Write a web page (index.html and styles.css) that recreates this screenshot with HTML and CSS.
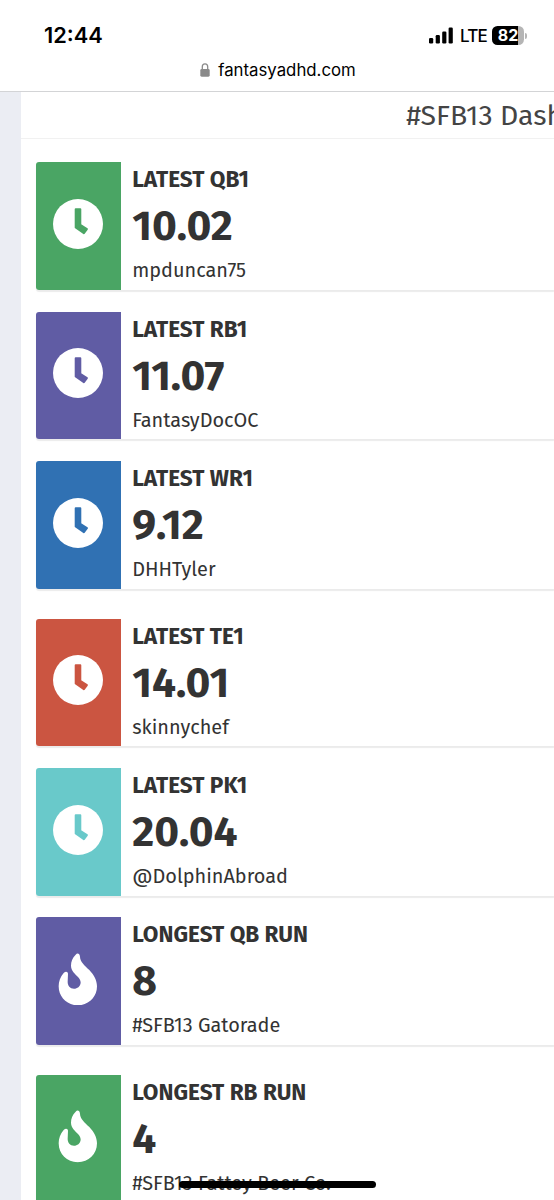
FILE: index.html
```
<!DOCTYPE html>
<html lang="en">
<head>
 <meta charset="utf-8">
 <title>#SFB13 Dash</title>
 <link rel="stylesheet" href="styles.css">
</head>
<body>
<svg class="defs" width="0" height="0">
 <symbol id="clock" viewBox="0 0 50 50">
  <circle cx="25" cy="25" r="25" fill="#fff"/>
  <path d="M22.7 10.3h4.6v15.5l6.6 4.4-3 3.9-8.2-5.7z" fill="currentColor" stroke="currentColor" stroke-width="2" stroke-linejoin="round"/>
 </symbol>
 <symbol id="flame" viewBox="40 37 120 158">
  <path d="M93 42C83 52 79 63 79 75C79 90 91 99 102 111C106 116 108 121 108 126C107 137 98 144 88 144C76 144 69 135 69 124L70 99C69 92 63 91 57 97C47 108 42 122 42 137C42 169 67 194 99 194C132 194 157 169 157 137C157 119 148 103 134 88C120 74 106 63 106 48C105 38 98 36 93 42Z" fill="#fff"/>
 </symbol>
</svg>

<header class="phone">
 <div class="status">
  <span class="time">12:44</span>
  <div class="signals">
   <svg class="bars" width="25" height="17" viewBox="0 0 25 17">
    <rect x="0" y="11" width="4.2" height="5.5" rx="1.2"/>
    <rect x="6.7" y="8" width="4.2" height="8.5" rx="1.2"/>
    <rect x="13.2" y="4.5" width="4.2" height="12" rx="1.2"/>
    <rect x="19.6" y="0.5" width="4.2" height="16" rx="1.2"/>
   </svg>
   <span class="lte">LTE</span>
   <span class="battery">82</span>
   <span class="nub"></span>
  </div>
 </div>
 <div class="address">
  <svg width="10" height="14" viewBox="0 0 10 14">
   <path d="M2.3 7V3.8a2.7 3 0 0 1 5.4 0V7" fill="none" stroke="#8a8a8a" stroke-width="1.3"/>
   <rect x="0.3" y="6" width="9.4" height="7.7" rx="1.4" fill="#8a8a8a"/>
  </svg>
  <span class="url">fantasyadhd.com</span>
 </div>
</header>

<main class="content">
 <h1>#SFB13 Dash</h1>

 <div class="group">
  <div class="info-box">
   <div class="icon green"><svg class="clock"><use href="#clock"/></svg></div>
   <div class="text"><span class="label">LATEST QB1</span><span class="number">10.02</span><span class="owner">mpduncan75</span></div>
  </div>
  <div class="info-box">
   <div class="icon purple"><svg class="clock"><use href="#clock"/></svg></div>
   <div class="text"><span class="label">LATEST RB1</span><span class="number">11.07</span><span class="owner">FantasyDocOC</span></div>
  </div>
  <div class="info-box">
   <div class="icon blue"><svg class="clock"><use href="#clock"/></svg></div>
   <div class="text"><span class="label">LATEST WR1</span><span class="number">9.12</span><span class="owner">DHHTyler</span></div>
  </div>
 </div>

 <div class="group">
  <div class="info-box">
   <div class="icon red"><svg class="clock"><use href="#clock"/></svg></div>
   <div class="text"><span class="label">LATEST TE1</span><span class="number">14.01</span><span class="owner">skinnychef</span></div>
  </div>
  <div class="info-box">
   <div class="icon teal"><svg class="clock"><use href="#clock"/></svg></div>
   <div class="text"><span class="label">LATEST PK1</span><span class="number">20.04</span><span class="owner">@DolphinAbroad</span></div>
  </div>
  <div class="info-box">
   <div class="icon purple"><svg class="flame"><use href="#flame"/></svg></div>
   <div class="text"><span class="label">LONGEST QB RUN</span><span class="number">8</span><span class="owner">#SFB13 Gatorade</span></div>
  </div>
 </div>

 <div class="group">
  <div class="info-box">
   <div class="icon green"><svg class="flame"><use href="#flame"/></svg></div>
   <div class="text"><span class="label">LONGEST RB RUN</span><span class="number">4</span><span class="owner">#SFB13 Fattey Beer Co.</span></div>
  </div>
 </div>
</main>

<div class="home-bar"></div>
</body>
</html>
```
FILE: styles.css
```
* { box-sizing: border-box; }

body {
 margin:       0;
 height:       1200px;
 overflow:     hidden;
 display:      flex;
 flex-direction: column;
 background:   #ebedf3;
 color:        #333;
 font-family:  "Fira Sans", "Noto Sans", sans-serif;
}

.defs { position: absolute; }

/* phone status bar and address */
.phone {
 flex:         none;
 height:       91.5px;
 padding-top:  21px;
 background:   #fff;
 border-bottom: 1.5px solid #d3d4d6;
 color:        #000;
 font-family:  Inter, sans-serif;
}

.status {
 display:      flex;
 justify-content: space-between;
 align-items:  center;
 height:       29px;
 padding:      0 27px 0 44px;
}

.time {
 font-size:    21.8px;
 font-weight:  600;
 line-height:  27px;
 padding-bottom: 1px;
}

.signals {
 display:      flex;
 align-items:  center;
}

.lte {
 margin-left:  6px;
 width:        26px;
 font-size:    17px;
 font-weight:  500;
 letter-spacing: -0.8px;
}

.battery {
 margin-left:  6px;
 width:        32px;
 height:       19px;
 border-radius: 5.5px;
 background:   linear-gradient(to right, #000 26.5px, #b5b5b5 26.5px);
 color:        #fff;
 font-size:    16px;
 font-weight:  700;
 line-height:  19px;
 text-align:   center;
}

.nub {
 margin-left:  1px;
 width:        2px;
 height:       6px;
 border-radius: 0 2px 2px 0;
 background:   #b5b5b5;
}

.address {
 display:      flex;
 justify-content: center;
 align-items:  center;
 gap:          8px;
 height:       40px;
 padding-left: 2px;
}

.url {
 font-size:    16.8px;
 line-height:  20px;
}

/* dashboard */
.content {
 flex:         1;
 min-height:   0;
 margin-left:  21px;
 overflow:     hidden;
 background:   #fff;
}

h1 {
 margin:       0 0 23.3px;
 height:       47.5px;
 padding-left: 385.3px;
 border-bottom: 1px solid #f1f1f1;
 color:        #444;
 font-size:    28.4px;
 font-weight:  400;
 line-height:  47px;
 white-space:  nowrap;
}

.group {
 display:      flex;
 flex-direction: column;
 gap:          21.3px;
 margin:       0 0 29.8px 14.6px;
}

.info-box {
 display:      flex;
 height:       127.8px;
 margin-bottom: 0.2px;
 border-radius: 3px 0 0 3px;
 background:   #fff;
 box-shadow:   0 1.3px 1px rgba(0, 0, 0, 0.08);
}

.icon {
 display:      flex;
 justify-content: center;
 align-items:  center;
 width:        85px;
 padding-bottom: 4.5px;
 border-radius: 3px 0 0 3px;
}

.clock { width: 50px; height: 50px; }
.flame { width: 40px; height: 52.7px; }

.green  { background: #4aa564; color: #4aa564; }
.purple { background: #605ca4; color: #605ca4; }
.blue   { background: #3071b3; color: #3071b3; }
.red    { background: #cb5541; color: #cb5541; }
.teal   { background: #69c9ca; color: #69c9ca; }

.text {
 display:      flex;
 flex-direction: column;
 padding:      3px 0 0 11.6px;
 white-space:  nowrap;
}

.label {
 height:       30px;
 font-size:    22.6px;
 font-weight:  700;
 line-height:  30px;
}

.number {
 height:       60px;
 font-size:    42.5px;
 font-weight:  700;
 line-height:  61px;
}

.owner {
 height:       30px;
 font-size:    19.9px;
 line-height:  30px;
}

.home-bar {
 position:     absolute;
 left:         179px;
 bottom:       12px;
 width:        197px;
 height:       7px;
 border-radius: 4px;
 background:   #000;
}
```
